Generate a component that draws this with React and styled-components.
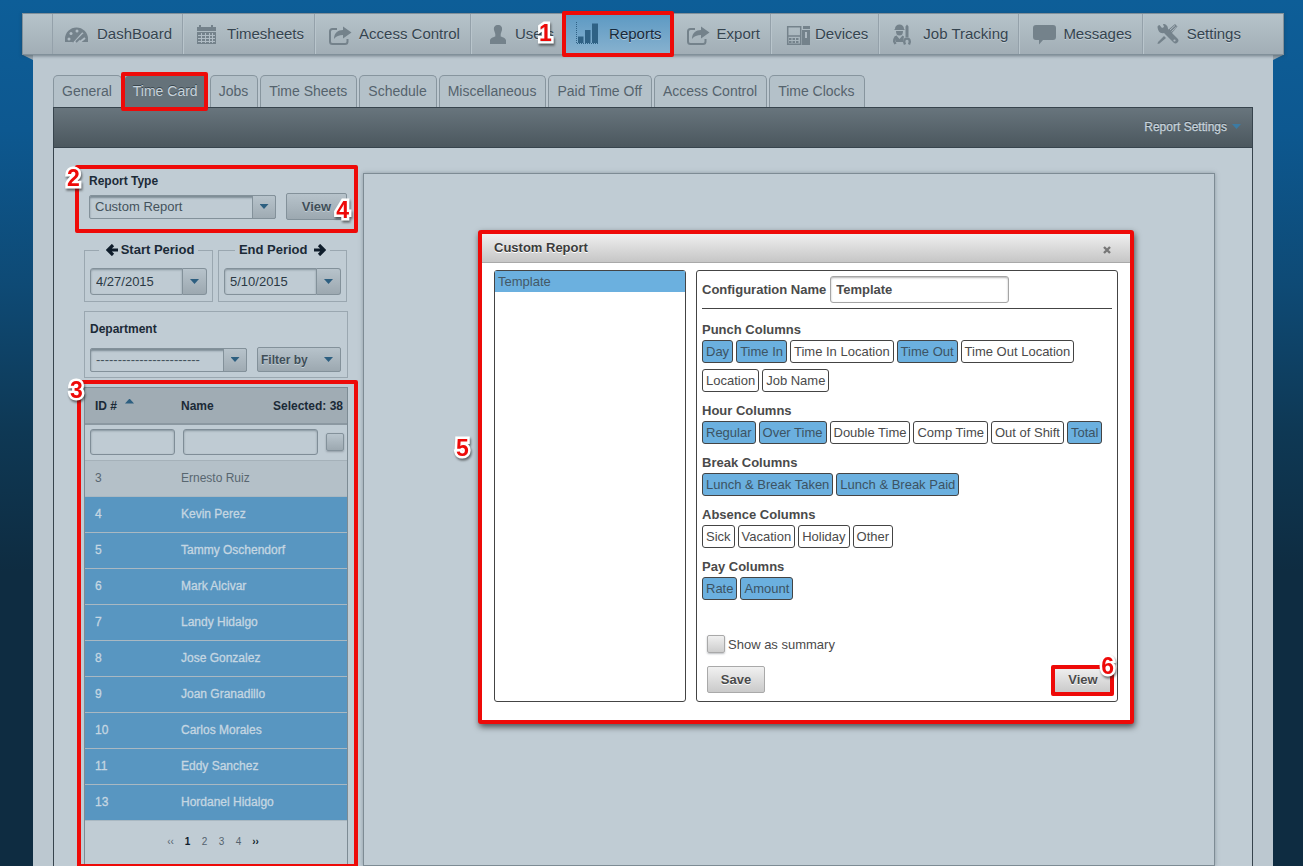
import React, { useState } from "react";
import styled, { createGlobalStyle, css } from "styled-components";

const ink = "#1b2a37";
const red = "#ee0a08";

const GlobalStyle = createGlobalStyle`
  *, *::before, *::after { box-sizing: border-box; }
  html { background: #0e2a3f; }
  body {
    margin: 0;
    color: ${ink};
    font-family: "Liberation Sans", Arial, sans-serif;
    font-size: 13px;
  }
  button, input, select { font: inherit; color: inherit; }
`;

const Page = styled.div`
  display: flex;
  flex-direction: column;
  min-height: 100vh;
  padding: 13px 19px 0 22px;
  background: linear-gradient(#0d5e98 0%, #0d5890 15%, #0e4a75 33%, #0e3854 50%, #0e2c41 66%, #0e2c41 100%);
`;

const NavBar = styled.nav`
  position: relative;
  z-index: 1;
  display: flex;
  height: 42px;
  padding-left: 29px;
  border: 1px solid #81909a;
  background: linear-gradient(#b6c3ca, #a2aeb6);
  box-shadow: 0 1px 3px rgba(40, 55, 66, 0.5);
`;

const NavItem = styled.a`
  position: relative;
  display: flex;
  align-items: center;
  padding: 0 10px 1px 0;
  border-right: 1px solid ${(p) => (p.$last ? "transparent" : "#94a1aa")};
  box-shadow: ${(p) => (p.$last ? "none" : "1px 0 0 #b9c5cc")};
  color: ${(p) => (p.$active ? "#17293a" : "#35444f")};
  font-size: 15px;
  text-decoration: none;
  text-shadow: 0 1px 0 rgba(205, 217, 224, 0.7);
  white-space: nowrap;
  ${(p) => p.$first && css`border-left: 1px solid #94a1aa;`}
  ${(p) => p.$active && css`background: linear-gradient(#5c99c3, #88b2cf);`}
`;

const NavIcon = styled.svg`
  width: 44px;
  height: 40px;
  flex: none;
  color: ${(p) => (p.$active ? "#2f6285" : "#74828b")};
`;

const Callout = styled.span`
  position: absolute;
  z-index: 3;
  inset: ${(p) => p.$inset};
  border: 4px solid ${red};
  border-radius: 2px;
  pointer-events: none;
`;

const Marker = styled.span`
  position: absolute;
  z-index: 4;
  left: ${(p) => p.$left || "auto"};
  right: ${(p) => p.$right || "auto"};
  top: ${(p) => p.$top};
  color: ${red};
  font-size: 23px;
  font-weight: bold;
  line-height: 24px;
  paint-order: stroke fill;
  -webkit-text-stroke: 5px #fff;
  filter: drop-shadow(1px 2px 1px rgba(30, 30, 30, 0.6));
  pointer-events: none;
`;

const Sheet = styled.div`
  position: relative;
  display: flex;
  flex: 1;
  flex-direction: column;
  margin: 0 11px;
  padding: 20px 20px 0;
  background: #bcc8d0;
  &::before, &::after {
    content: "";
    position: absolute;
    top: 0;
    width: 10px;
    height: 5px;
    background: #98a5ae;
  }
  &::before { left: -10px; clip-path: polygon(0 0, 100% 0, 100% 100%); }
  &::after { right: -10px; clip-path: polygon(0 0, 100% 0, 0 100%); }
`;

const TabList = styled.div`
  display: flex;
  gap: 2px;
`;

const Tab = styled.button`
  position: relative;
  height: 32px;
  padding: 0 9px 1px 8px;
  border: 1px solid #87959e;
  border-bottom: 0;
  border-radius: 5px 5px 0 0;
  background: ${(p) => (p.$active ? "#65727a" : "#b4c1c9")};
  color: ${(p) => (p.$active ? "#c8d4dc" : "#55636d")};
  font-size: 14px;
  text-shadow: ${(p) => (p.$active ? "0 -1px 0 #39464e" : "none")};
  white-space: nowrap;
`;

const Panel = styled.section`
  display: flex;
  flex: 1;
  flex-direction: column;
  border: 1px solid #37444d;
  border-bottom: 0;
  background: #c0ccd4;
`;

const Toolbar = styled.div`
  display: flex;
  align-items: center;
  justify-content: flex-end;
  height: 40px;
  padding: 0 6px 2px 0;
  border-bottom: 1px solid #37444d;
  background: linear-gradient(#68757d, #4b575e);
`;

const SettingsButton = styled.button`
  display: flex;
  align-items: center;
  gap: 5px;
  height: 28px;
  padding: 0 5px;
  border: 0;
  border-radius: 3px;
  background: transparent;
  color: #c6d2da;
  font-size: 12px;
  text-shadow: 0 -1px 0 #2c383f;
  -webkit-text-stroke: 0.3px #c6d2da;
`;

const Caret = styled.span`
  display: block;
  flex: none;
  width: 9px;
  height: 5px;
  background: ${(p) => p.$tone || "#2d5f80"};
  clip-path: ${(p) => (p.$up ? "polygon(0 100%, 50% 0, 100% 100%)" : "polygon(0 0, 100% 0, 50% 100%)")};
`;

const Columns = styled.div`
  display: flex;
  flex: 1;
  gap: 15px;
  padding: 25px 37px 0 30px;
`;

const Sidebar = styled.aside`
  display: flex;
  flex: none;
  flex-direction: column;
  width: 264px;
`;

const Viewer = styled.main`
  position: relative;
  flex: 1;
  min-width: 0;
  min-height: 692px;
  border: 1px solid #7d8b94;
  box-shadow: 0 0 4px rgba(90, 105, 116, 0.5);
`;

const ReportType = styled.div`
  position: relative;
  padding-left: 5px;
`;

const FieldLabel = styled.label`
  display: block;
  font-size: 12px;
  font-weight: bold;
  line-height: 16px;
`;

const FieldRow = styled.div`
  display: flex;
  align-items: center;
  gap: 10px;
  margin-top: ${(p) => p.$space};
`;

const SelectBox = styled.span`
  position: relative;
  display: block;
  width: ${(p) => p.$width};
  height: 24px;
`;

const Select = styled.select`
  width: 100%;
  height: 100%;
  padding: 0 28px 0 5px;
  appearance: none;
  border: 1px solid #83919a;
  border-radius: 2px;
  background: #bfcbd3;
  box-shadow: inset 0 2px 2px rgba(80, 95, 106, 0.6);
  color: #44525c;
`;

const SelectArrow = styled.span`
  position: absolute;
  inset: 0 0 0 auto;
  display: grid;
  place-items: center;
  width: 24px;
  border: 1px solid #83919a;
  border-radius: 0 2px 2px 0;
  background: linear-gradient(#b7c3cb, #9fabb3);
  pointer-events: none;
`;

const darkButton = css`
  border: 1px solid #83919a;
  border-radius: 2px;
  background: linear-gradient(#b7c3cb, #9ca8b0);
  color: #404e58;
  font-weight: bold;
  text-shadow: 0 1px 0 #c3cfd6;
`;

const ViewButton = styled.button`
  ${darkButton}
  width: 61px;
  height: 27px;
  padding: 0;
`;

const FilterButton = styled.button`
  ${darkButton}
  display: flex;
  align-items: center;
  justify-content: space-between;
  width: 84px;
  height: 25px;
  padding: 0 7px 0 3px;
  font-size: 12px;
`;

const Periods = styled.div`
  display: flex;
  gap: 5px;
  margin-top: 21px;
  padding-right: 1px;
`;

const Period = styled.fieldset`
  flex: 1;
  min-width: 0;
  margin: 0;
  padding: 9px 5px 6px;
  border: 1px solid #9aa7b0;
`;

const PeriodLegend = styled.legend`
  display: flex;
  align-items: center;
  gap: 3px;
  margin: 0 auto;
  padding: ${(p) => (p.$end ? "0 4px" : "0 4px 0 7px")};
  font-weight: bold;
  line-height: 18px;
`;

const DateBox = styled.div`
  display: flex;
  height: 27px;
`;

const DateInput = styled.input`
  flex: 1;
  min-width: 0;
  padding: 0 5px;
  border: 1px solid #83919a;
  border-radius: 3px 0 0 3px;
  background: #bfcbd3;
  box-shadow: inset 0 1px 2px rgba(80, 95, 106, 0.5);
  color: #2b3944;
`;

const DateButton = styled.button`
  display: grid;
  place-items: center;
  width: 24px;
  padding: 0;
  border: 1px solid #83919a;
  border-left: 0;
  border-radius: 0 3px 3px 0;
  background: linear-gradient(#b7c3cb, #9ca8b0);
`;

const Department = styled.div`
  margin-top: 9px;
  padding: 9px 5px 5px;
  border: 1px solid #9aa7b0;
`;

const Roster = styled.div`
  position: relative;
  flex: 1;
  margin-top: 9px;
  border: 1px solid #7d8b94;
  border-bottom: 0;
`;

const RosterTable = styled.table`
  width: 100%;
  border-collapse: collapse;
  table-layout: fixed;
  font-size: 12px;
  th, td { padding: 0 0 0 3px; text-align: left; }
  th:first-child, td:first-child { padding-left: 10px; }
`;

const HeadRow = styled.tr`
  height: 36px;
  border-bottom: 2px solid #8b98a1;
  background: #a0acb4;
`;

const SelectedHead = styled.th`
  && { padding-right: 4px; text-align: right; }
`;

const SortButton = styled.button`
  display: flex;
  gap: 8px;
  padding: 0;
  border: 0;
  background: none;
  font-weight: bold;
`;

const FilterRow = styled.tr`
  height: 36px;
  border-bottom: 1px solid #a5b1b9;
  && td { padding: 0 3px 0 5px; }
`;

const FilterInput = styled.input`
  display: block;
  width: 100%;
  height: 26px;
  border: 1px solid #7f8d97;
  border-radius: 3px;
  background: #bfcbd3;
  box-shadow: inset 0 1px 2px rgba(80, 95, 106, 0.5);
`;

const Check = styled.input`
  display: block;
  flex: none;
  width: 18px;
  height: 18px;
  margin: 0;
  appearance: none;
  border: 1px solid ${(p) => (p.$light ? "#a9a9a9" : "#83919a")};
  border-radius: 2px;
  background: ${(p) => (p.$light ? "linear-gradient(#f0f0f0, #cdcdcd)" : "linear-gradient(#b9c5cd, #9ca8b0)")};
  box-shadow: 0 1px 2px rgba(60, 70, 80, 0.35);
`;

const PersonRow = styled.tr`
  height: 36px;
  border-bottom: 1px solid #a9b8c2;
  background: ${(p) => (p.$selected ? "#5896c1" : "#b4c0c8")};
  color: ${(p) => (p.$selected ? "#c5d6e2" : "#586670")};
  -webkit-text-stroke: ${(p) => (p.$selected ? "0.3px #c5d6e2" : "0")};
`;

const Pager = styled.nav`
  display: flex;
  align-items: center;
  justify-content: center;
  gap: 5px;
  height: 42px;
  padding-right: 6px;
  font-size: 10px;
`;

const PageButton = styled.button`
  min-width: 12px;
  padding: 0;
  border: 0;
  background: none;
  color: ${(p) => (p.$strong ? "#0f1d2b" : "#54636e")};
  font-weight: ${(p) => (p.$strong ? "bold" : "normal")};
  text-align: center;
`;

const Dialog = styled.div`
  position: absolute;
  z-index: 5;
  top: 56px;
  left: 114px;
  right: 80px;
  border: 4px solid ${red};
  border-radius: 3px;
  background: #fff;
  box-shadow: 1px 3px 6px rgba(0, 0, 0, 0.6);
  color: #4a4a4a;
`;

const DialogHeader = styled.header`
  display: flex;
  align-items: center;
  justify-content: space-between;
  height: 29px;
  padding: 0 17px 2px 12px;
  border-bottom: 1px solid #a9a9a9;
  background: linear-gradient(#efefef, #c6c6c6);
`;

const DialogTitle = styled.h2`
  margin: 0;
  color: #3b3b3b;
  font-size: 13px;
  text-shadow: 0 1px 0 #fff;
`;

const CloseButton = styled.button`
  display: grid;
  place-items: center;
  width: 12px;
  height: 12px;
  margin-top: 6px;
  padding: 0;
  border: 0;
  background: none;
  color: #777;
`;

const DialogBody = styled.div`
  display: flex;
  gap: 10px;
  padding: 7px 12px 18px;
`;

const TemplateList = styled.ul`
  width: 192px;
  margin: 0;
  padding: 0;
  border: 1px solid #444;
  border-radius: 3px;
  list-style: none;
`;

const TemplateItem = styled.button`
  display: block;
  width: 100%;
  height: 21px;
  padding: 0 3px;
  border: 0;
  background: #6bb0df;
  color: #435866;
  text-align: left;
`;

const Form = styled.form`
  flex: 1;
  min-width: 0;
  min-height: 432px;
  padding: 5px;
  border: 1px solid #444;
  border-radius: 3px;
`;

const NameRow = styled.div`
  display: flex;
  align-items: center;
  gap: 4px;
  padding-bottom: 5px;
  border-bottom: 1px solid #444;
  font-weight: bold;
`;

const NameInput = styled.input`
  width: 179px;
  height: 27px;
  padding: 0 5px;
  border: 1px solid #a5a5a5;
  border-radius: 3px;
  box-shadow: inset 0 1px 2px rgba(0, 0, 0, 0.3);
`;

const Groups = styled.div`
  display: flex;
  flex-direction: column;
  gap: 10px;
  padding: 12px 0 35px;
`;

const GroupTitle = styled.h3`
  margin: 0 0 1px;
  font-size: 13px;
  line-height: 18px;
`;

const Chips = styled.div`
  display: flex;
  flex-wrap: wrap;
  gap: 6px 3px;
`;

const Chip = styled.button`
  height: 23px;
  padding: 0 3px;
  border: 1px solid #444;
  border-radius: 3px;
  background: ${(p) => (p.$on ? "#6bb0df" : "#fff")};
  color: ${(p) => (p.$on ? "#3c5363" : "#4a4a4a")};
  white-space: nowrap;
`;

const SummaryRow = styled.label`
  display: flex;
  align-items: center;
  gap: 3px;
  padding-left: 5px;
`;

const Actions = styled.div`
  display: flex;
  justify-content: space-between;
  padding: 13px 0 0 5px;
`;

const ActionSlot = styled.span`
  position: relative;
`;

const ActionButton = styled.button`
  width: 58px;
  height: 27px;
  padding: 0;
  border: 1px solid #a9a9a9;
  border-radius: 2px;
  background: linear-gradient(#f1f1f1, #cacaca);
  font-weight: bold;
  text-shadow: 0 1px 0 #fff;
`;

const icons = {
  DashBoard: (
    <>
      <path fill="currentColor" d="M12 28v-3a11.500 11.500 0 0 1 23 0v3h-7l-2-3-4 4-3-1z" />
      <g fill="#b0bcc4">
        <circle cx="16" cy="25" r="1.500" /><circle cx="18" cy="19.500" r="1.500" /><circle cx="24" cy="17" r="1.500" />
      </g>
      <path stroke="#b0bcc4" strokeWidth="2" d="M21 29l9-10M27 28l5-4" />
      <path stroke="currentColor" strokeWidth="2" d="M23 28l8-8" />
    </>
  ),
  Timesheets: (
    <>
      <path fill="currentColor" d="M14 13h2v-2h2v2h10v-2h2v2h3v4H14zM14 18h19v12H14z" />
      <path stroke="#b0bcc4" d="M15 21.500h17M15 24.500h17M15 27.500h17M18.500 19v10M22.500 19v10M26.500 19v10M29.500 19v10" />
    </>
  ),
  Share: (
    <>
      <path fill="none" stroke="currentColor" strokeWidth="2" d="M22 15h-4.500a2.500 2.500 0 0 0-2.500 2.500v10a2.500 2.500 0 0 0 2.500 2.500H30a2.500 2.500 0 0 0 2.500-2.500V25" />
      <path fill="currentColor" d="M19 25c0-6 4-9 9-9v-3.500l8.500 6-8.500 6V21c-4 0-6.500 1-9 4z" />
    </>
  ),
  Users: (
    <path fill="currentColor" d="M27 11c3 0 4.500 2 4 5l-1.300 4v2.500c2.500.8 5.300 2 5.300 4V30H19v-3.500c0-2 2.800-3.200 5.300-4V20L23 16c-.5-3 1-5 4-5z" />
  ),
  Reports: (
    <>
      <path fill="currentColor" d="M13 22.500h5.500V29H13zM20 16h5.500v13H20zM27 9.500h6V29h-6z" />
      <path stroke="currentColor" strokeDasharray="1 1" d="M11.500 8v21.500M12 29.500h21" />
    </>
  ),
  Devices: (
    <>
      <path fill="none" stroke="currentColor" strokeWidth="1.500" d="M16.700 12.700h13v17.600h-13z" />
      <path stroke="currentColor" strokeWidth="1.500" d="M17 22h12" />
      <path stroke="currentColor" strokeWidth="2" strokeDasharray="2.500 1" d="M18 25h10.500M18 28h10.500" />
      <path fill="currentColor" d="M32 12h7v3h-7zM31 16h8v15h-8z" />
      <path fill="#aeb9c1" d="M34 18h2v6h-2z" />
    </>
  ),
  "Job Tracking": (
    <>
      <path fill="currentColor" d="M16 15c0-3 2-4.500 4.500-4.500S25 12 25 15l1 1H15zM17 17h7c0 3-1 4.500-3.500 4.500S17 20 17 17zM26.500 12.500l1.500-2 1.500 2V23h-3z" />
      <path fill="currentColor" d="M15.500 22.500l2-1 3 3.500 3-3.500 1.500 1-1 5.500h-7z" />
      <path fill="none" stroke="currentColor" strokeWidth="2.400" d="M16.500 30l-1.300-2.500c0-2.500 1-4 2.500-4.500M26 30.500c-2-4 0-6 2-6s4 2 2 6" />
    </>
  ),
  Messages: (
    <path fill="currentColor" d="M17 11h17a3 3 0 0 1 3 3v9a3 3 0 0 1-3 3H24l-4 4.500V26h-3a3 3 0 0 1-3-3v-9a3 3 0 0 1 3-3z" />
  ),
  Settings: (
    <>
      <path fill="currentColor" d="M14.500 13c0-1 1-2 2-2l2.500 3 2-1-1-3c3 0 5 2 5 5l9.500 9.500a2.800 2.800 0 0 1-4 4L21 19c-4 1-6-2-6.500-6z" />
      <path fill="currentColor" d="M34.500 12.500l-2.500-2.500-7 6 3.500 3.500zM15 28l6-6 2 2-6.500 5.500-2 .5z" />
      <path stroke="#aeb9c1" d="M27 16l5-4.500M28.500 17.500l5-4.500" />
      <circle cx="31.500" cy="26.500" r="1.100" fill="#aeb9c1" />
    </>
  ),
};

const navItems = [
  ["DashBoard", "DashBoard"], ["Timesheets", "Timesheets"], ["Access Control", "Share"], ["Users", "Users"],
  ["Reports", "Reports"], ["Export", "Share"], ["Devices", "Devices"], ["Job Tracking", "Job Tracking"],
  ["Messages", "Messages"], ["Settings", "Settings"],
];

const tabs = ["General", "Time Card", "Jobs", "Time Sheets", "Schedule", "Miscellaneous", "Paid Time Off", "Access Control", "Time Clocks"];

const people = [
  [3, "Ernesto Ruiz"], [4, "Kevin Perez"], [5, "Tammy Oschendorf"], [6, "Mark Alcivar"], [7, "Landy Hidalgo"],
  [8, "Jose Gonzalez"], [9, "Joan Granadillo"], [10, "Carlos Morales"], [11, "Eddy Sanchez"], [13, "Hordanel Hidalgo"],
];

const columnGroups = [
  ["Punch Columns", ["Day", "Time In", "Time In Location", "Time Out", "Time Out Location", "Location", "Job Name"]],
  ["Hour Columns", ["Regular", "Over Time", "Double Time", "Comp Time", "Out of Shift", "Total"]],
  ["Break Columns", ["Lunch & Break Taken", "Lunch & Break Paid"]],
  ["Absence Columns", ["Sick", "Vacation", "Holiday", "Other"]],
  ["Pay Columns", ["Rate", "Amount"]],
];

const initialColumns = ["Day", "Time In", "Time Out", "Regular", "Over Time", "Total", "Lunch & Break Taken", "Lunch & Break Paid", "Rate", "Amount"];

function Arrow({ left }) {
  return (
    <svg width="12" height="12" viewBox="0 0 12 12" aria-hidden="true">
      <path
        fill="none"
        stroke="#0f1d2b"
        strokeWidth="3.200"
        d={left ? "M7 1L2 6l5 5M2 6h10" : "M5 1l5 5-5 5M10 6H0"}
      />
    </svg>
  );
}

function DateField({ id, label, value }) {
  return (
    <DateBox>
      <DateInput id={id} aria-label={label} defaultValue={value} />
      <DateButton type="button" aria-label={`Choose ${label}`}><Caret /></DateButton>
    </DateBox>
  );
}

function CustomReportDialog() {
  const [columns, setColumns] = useState(initialColumns);
  const toggle = (name) =>
    setColumns((current) => (current.includes(name) ? current.filter((c) => c !== name) : [...current, name]));

  return (
    <Dialog role="dialog" aria-labelledby="dialog-title">
      <Marker $left="-26px" $top="202px">5</Marker>
      <DialogHeader>
        <DialogTitle id="dialog-title">Custom Report</DialogTitle>
        <CloseButton type="button" aria-label="Close">
          <svg width="8" height="8" viewBox="0 0 8 8"><path stroke="currentColor" strokeWidth="2.400" d="M1 1l6 6M7 1L1 7" /></svg>
        </CloseButton>
      </DialogHeader>
      <DialogBody>
        <TemplateList>
          <li><TemplateItem type="button">Template</TemplateItem></li>
        </TemplateList>
        <Form onSubmit={(e) => e.preventDefault()}>
          <NameRow>
            <label htmlFor="config-name">Configuration Name</label>
            <NameInput id="config-name" defaultValue="Template" />
          </NameRow>
          <Groups>
            {columnGroups.map(([title, names]) => (
              <section key={title}>
                <GroupTitle>{title}</GroupTitle>
                <Chips>
                  {names.map((name) => (
                    <Chip
                      key={name}
                      type="button"
                      $on={columns.includes(name)}
                      aria-pressed={columns.includes(name)}
                      onClick={() => toggle(name)}
                    >
                      {name}
                    </Chip>
                  ))}
                </Chips>
              </section>
            ))}
          </Groups>
          <SummaryRow>
            <Check type="checkbox" $light />
            Show as summary
          </SummaryRow>
          <Actions>
            <ActionButton type="button">Save</ActionButton>
            <ActionSlot>
              <ActionButton type="submit">View</ActionButton>
              <Callout $inset="-1px -2px -3px -3px" />
              <Marker $right="-2px" $top="-12px">6</Marker>
            </ActionSlot>
          </Actions>
        </Form>
      </DialogBody>
    </Dialog>
  );
}

export default function App() {
  return (
    <>
      <GlobalStyle />
      <Page>
        <NavBar>
          {navItems.map(([label, icon], i) => {
            const active = label === "Reports";
            return (
              <NavItem key={label} href="#" $active={active} $first={i === 0} $last={i === navItems.length - 1}>
                <NavIcon $active={active} viewBox="0 0 44 40" aria-hidden="true">{icons[icon]}</NavIcon>
                {label}
                {active && <Callout $inset="-3px -2px -3px -3px" />}
                {active && <Marker $left="-26px" $top="7px">1</Marker>}
              </NavItem>
            );
          })}
        </NavBar>
        <Sheet>
          <TabList role="tablist">
            {tabs.map((tab) => (
              <Tab key={tab} type="button" role="tab" aria-selected={tab === "Time Card"} $active={tab === "Time Card"}>
                {tab}
                {tab === "Time Card" && <Callout $inset="-4px -1px -4px -4px" />}
              </Tab>
            ))}
          </TabList>
          <Panel>
            <Toolbar>
              <SettingsButton type="button">Report Settings <Caret $tone="#3c7ba3" /></SettingsButton>
            </Toolbar>
            <Columns>
              <Sidebar>
                <ReportType>
                  <Callout $inset="-8px -10px -13px -9px" />
                  <Marker $left="-17px" $top="-7px">2</Marker>
                  <FieldLabel htmlFor="report-type">Report Type</FieldLabel>
                  <FieldRow $space="4px">
                    <SelectBox $width="187px">
                      <Select id="report-type"><option>Custom Report</option></Select>
                      <SelectArrow><Caret /></SelectArrow>
                    </SelectBox>
                    <ViewButton type="button">View</ViewButton>
                  </FieldRow>
                  <Marker $right="-1px" $top="25px">4</Marker>
                </ReportType>
                <Periods>
                  <Period>
                    <PeriodLegend><Arrow left />Start Period</PeriodLegend>
                    <DateField id="start" label="Start Period" value="4/27/2015" />
                  </Period>
                  <Period>
                    <PeriodLegend $end>End Period&nbsp;<Arrow /></PeriodLegend>
                    <DateField id="end" label="End Period" value="5/10/2015" />
                  </Period>
                </Periods>
                <Department>
                  <FieldLabel htmlFor="department">Department</FieldLabel>
                  <FieldRow $space="10px">
                    <SelectBox $width="157px">
                      <Select id="department"><option>------------------------</option></Select>
                      <SelectArrow><Caret /></SelectArrow>
                    </SelectBox>
                    <FilterButton type="button">Filter by <Caret /></FilterButton>
                  </FieldRow>
                </Department>
                <Roster>
                  <Callout $inset="-8px -11px -2px -8px" />
                  <Marker $left="-15px" $top="-10px">3</Marker>
                  <RosterTable>
                    <colgroup>
                      <col width="93" /><col width="60" /><col /><col width="26" />
                    </colgroup>
                    <thead>
                      <HeadRow>
                        <th><SortButton type="button">ID # <Caret $up /></SortButton></th>
                        <th>Name</th>
                        <SelectedHead colSpan={2}>Selected: 38</SelectedHead>
                      </HeadRow>
                    </thead>
                    <tbody>
                      <FilterRow>
                        <td><FilterInput aria-label="Filter by ID" /></td>
                        <td colSpan={2}><FilterInput aria-label="Filter by name" /></td>
                        <td><Check type="checkbox" aria-label="Select all" /></td>
                      </FilterRow>
                      {people.map(([id, name]) => (
                        <PersonRow key={id} $selected={id !== 3}>
                          <td>{id}</td>
                          <td colSpan={3}>{name}</td>
                        </PersonRow>
                      ))}
                    </tbody>
                  </RosterTable>
                  <Pager aria-label="Pages">
                    <PageButton type="button">‹‹</PageButton>
                    <PageButton type="button" $strong>1</PageButton>
                    <PageButton type="button">2</PageButton>
                    <PageButton type="button">3</PageButton>
                    <PageButton type="button">4</PageButton>
                    <PageButton type="button" $strong>››</PageButton>
                  </Pager>
                </Roster>
              </Sidebar>
              <Viewer>
                <CustomReportDialog />
              </Viewer>
            </Columns>
          </Panel>
        </Sheet>
      </Page>
    </>
  );
}
